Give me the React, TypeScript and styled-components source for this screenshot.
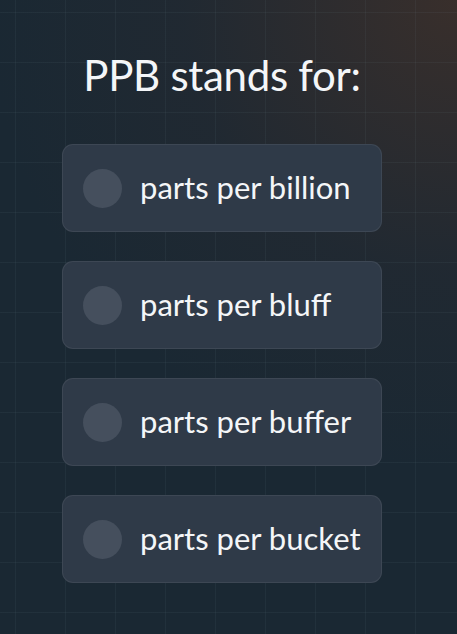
import React from 'react'
import styled, { createGlobalStyle } from 'styled-components';

const GlobalStyle = createGlobalStyle`
    html, body {
        margin: 0;
        padding: 0;
        background: #1a2833;
    }
`;

const Page = styled.div`
    width: 457px;
    height: 634px;
    overflow: hidden;
    box-sizing: border-box;
    padding: 50px 0 0 62px;
    font-family: Lato, "Noto Sans", sans-serif;
    color: #f4f6f8;
    background-color: #1a2833;
    background-image:
        linear-gradient(rgba(120, 150, 160, 0.08) 1px, transparent 1px),
        linear-gradient(90deg, rgba(120, 150, 160, 0.08) 1px, transparent 1px),
        radial-gradient(circle at 100% 0%, rgba(62, 48, 42, 0.85) 0%, rgba(40, 42, 48, 0.45) 35%, rgba(26, 40, 51, 0) 60%);
    background-size: 50px 50px, 50px 50px, 100% 100%;
    background-position: 0 12px, 15px 0, 0 0;
`;

const Column = styled.div`
    width: 320px;
    display: flex;
    flex-direction: column;
    gap: 29px;
`;

const Question = styled.h1`
    margin: 0 0 15px;
    font-size: 42px;
    font-weight: 400;
    line-height: 50px;
    text-align: center;
    letter-spacing: -0.3px;
`;

const Option = styled.div`
    height: 88px;
    box-sizing: border-box;
    display: flex;
    align-items: center;
    gap: 18px;
    padding: 0 18px 0 20px;
    background: #2f3a48;
    border: 1px solid rgba(255, 255, 255, 0.07);
    border-radius: 11px;
`;

const Radio = styled.span`
    width: 39px;
    height: 39px;
    flex: none;
    border-radius: 50%;
    background: #454f5d;
`;

const Label = styled.span`
    font-size: 31px;
    line-height: 1;
    padding-bottom: 2px;
`;

const answers = ['parts per billion', 'parts per bluff', 'parts per buffer', 'parts per bucket'];

export default function App() {
    return <Page>
        <GlobalStyle />
        <Column>
            <Question>PPB stands for:</Question>
            {answers.map(a => (
                <Option key={a}>
                    <Radio />
                    <Label>{a}</Label>
                </Option>
            ))}
        </Column>
    </Page>
}
